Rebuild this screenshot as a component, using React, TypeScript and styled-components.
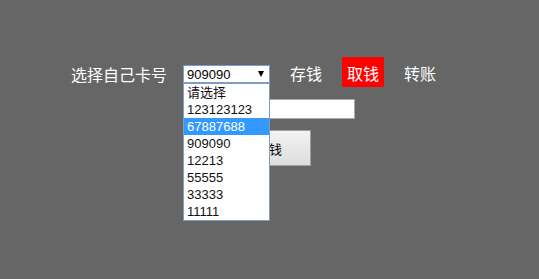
import React from 'react'
import styled, { createGlobalStyle } from 'styled-components'

const GlobalStyle = createGlobalStyle`
  html, body {
    margin: 0;
    padding: 0;
    background: #666666;
  }
  body {
    font-family: "Noto Sans CJK SC", "Liberation Sans", sans-serif;
  }
`

const Page = styled.div`
  width: 539px;
  height: 279px;
  box-sizing: border-box;
  padding: 57px 0 0 71px;
`

const Nav = styled.div`
  display: flex;
  align-items: center;
  height: 30px;
`

const Label = styled.span`
  color: #fff;
  font-size: 16px;
  line-height: 16px;
  padding-top: 4px;
  margin-right: 16px;
`

const SelectWrap = styled.div`
  position: relative;
  margin-top: 4px;
  margin-right: 15px;
`

const SelectBox = styled.div`
  box-sizing: border-box;
  width: 87px;
  height: 18px;
  border: 1px solid #7a9cd3;
  background: #fff;
  display: flex;
  align-items: center;
  justify-content: space-between;
  padding: 0 5px 0 3px;
  font-family: "Liberation Sans", "Noto Sans CJK SC", sans-serif;
  font-size: 13px;
  color: #000;
`

const Arrow = styled.span`
  width: 0;
  height: 0;
  border-left: 3.5px solid transparent;
  border-right: 3.5px solid transparent;
  border-top: 6px solid #000;
`

const Dropdown = styled.ul`
  position: absolute;
  top: 18px;
  left: 0;
  box-sizing: border-box;
  width: 87px;
  margin: 0;
  padding: 0;
  list-style: none;
  background: #fff;
  border: 1px solid #7f9db9;
  z-index: 10;
`

const Option = styled.li<{ $active?: boolean }>`
  height: 17px;
  line-height: 17px;
  padding-left: 3px;
  font-family: "Liberation Sans", "Noto Sans CJK SC", sans-serif;
  font-size: 13px;
  color: ${p => (p.$active ? '#fff' : '#111')};
  background: ${p => (p.$active ? '#3399ff' : 'transparent')};
  white-space: nowrap;
`

const NavLink = styled.a<{ $active?: boolean }>`
  box-sizing: border-box;
  width: 42px;
  height: 30px;
  margin-right: 15px;
  display: flex;
  align-items: center;
  justify-content: center;
  color: #fff;
  font-size: 16px;
  line-height: 16px;
  padding-top: 1px;
  text-decoration: none;
  background: ${p => (p.$active ? '#ff0000' : 'transparent')};
`

const Form = styled.div`
  display: flex;
  flex-direction: column;
  align-items: flex-start;
  gap: 11px;
  margin-top: 12px;
`

const Input = styled.input`
  box-sizing: border-box;
  width: 154px;
  height: 20px;
  margin-left: 130px;
  border: 1px solid #a9a9a9;
  background: #fff;
  outline: none;
`

const Button = styled.button`
  box-sizing: border-box;
  width: 84px;
  height: 36px;
  margin-left: 156px;
  border: 1px solid #a0a0a0;
  background: linear-gradient(#f3f3f3, #dddddd);
  font-family: "Noto Sans CJK SC", sans-serif;
  font-size: 13px;
  color: #000;
  padding: 0;
`

const cards = ['请选择', '123123123', '67887688', '909090', '12213', '55555', '33333', '11111']

export default function App() {
  return (
    <Page>
      <GlobalStyle />
      <Nav>
        <Label>选择自己卡号</Label>
        <SelectWrap>
          <SelectBox>
            <span>909090</span>
            <Arrow />
          </SelectBox>
          <Dropdown>
            {cards.map(c => (
              <Option key={c} $active={c === '67887688'}>
                {c}
              </Option>
            ))}
          </Dropdown>
        </SelectWrap>
        <NavLink>存钱</NavLink>
        <NavLink $active>取钱</NavLink>
        <NavLink>转账</NavLink>
      </Nav>
      <Form>
        <Input />
        <Button>取钱</Button>
      </Form>
    </Page>
  )
}
